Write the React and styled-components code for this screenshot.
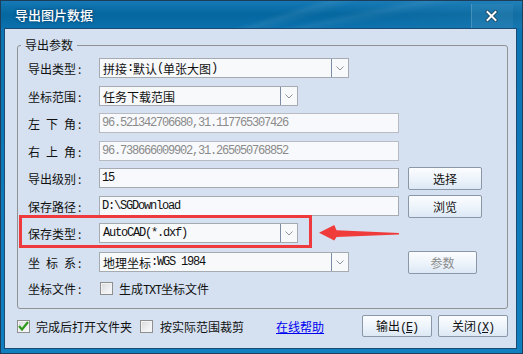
import React from 'react'
import styled, { createGlobalStyle } from 'styled-components'

const GlobalStyle = createGlobalStyle`
  html, body {
    margin: 0;
    padding: 0;
    background: #ffffff;
  }
  body {
    font-family: "Noto Sans CJK SC", "Liberation Sans", sans-serif;
    font-size: 12px;
    color: #111;
  }
`

const Window = styled.div`
  position: relative;
  width: 523px;
  height: 354px;
  box-sizing: border-box;
  border: 1px solid #1f3d58;
  background: linear-gradient(180deg, #0c74b2 0%, #0d7abb 60%, #0f7fc0 100%);
  display: flex;
  flex-direction: column;
`

const TitleBar = styled.div`
  height: 27px;
  display: flex;
  align-items: center;
  padding-left: 14px;
  background:
    linear-gradient(162deg, transparent 52%, rgba(255, 255, 255, 0.07) 55%, transparent 60%),
    linear-gradient(168deg, transparent 62%, rgba(255, 255, 255, 0.06) 66%, transparent 72%),
    linear-gradient(90deg, rgba(255, 255, 255, 0) 60%, rgba(255, 255, 255, 0.05) 100%),
    linear-gradient(180deg, #1479b5 0%, #05679f 50%, #0a70ad 100%);
`

const Title = styled.span`
  color: #fff;
  font-size: 13px;
  font-weight: 500;
  text-shadow: 0 0 3px rgba(0, 30, 60, 0.7);
`

const CloseBtn = styled.div`
  margin-left: auto;
  margin-right: 9px;
  margin-top: 3px;
  width: 42px;
  height: 24px;
  box-sizing: border-box;
  border-left: 1px solid rgba(255, 255, 255, 0.18);
  background: rgba(255, 255, 255, 0.05);
  display: flex;
  align-items: center;
  justify-content: center;
  padding-right: 2px;
`

const Body = styled.div`
  flex: 1;
  margin: 0 5px 4px 3px;
  border: 1px solid #1b4b73;
  background: #d5e1f0;
  display: flex;
  flex-direction: column;
`

const Group = styled.fieldset`
  margin: 8px 8px 0 12px;
  padding: 5px 0 10px 10px;
  border: 1px solid #8f9193;
  border-radius: 3px;
  min-width: 0;
`

const Legend = styled.legend`
  margin-left: -7px;
  padding: 0 4px;
  line-height: 16px;
  font-size: 12px;
  color: #111;
`

const Row = styled.div`
  display: flex;
  align-items: center;
  height: ${p => p.$h || 20}px;
  margin-top: ${p => p.$gap || 0}px;
`

const Label = styled.div`
  width: 71px;
  display: flex;
  align-items: center;
  flex-shrink: 0;
`

const LabelChars = styled.span`
  width: 48px;
  display: flex;
  justify-content: space-between;
`

const Colon = styled.span`
  margin-left: 2px;
`

const FieldCell = styled.div`
  width: 309px;
  flex-shrink: 0;
  display: flex;
  align-items: center;
`

const Combo = styled.div`
  width: ${p => p.$w}px;
  height: 20px;
  box-sizing: border-box;
  border: 1px solid #a6abb2;
  background: #f8f9fb;
  display: flex;
`

const ComboText = styled.div`
  flex: 1;
  padding-left: 3px;
  display: flex;
  align-items: center;
  white-space: nowrap;
  color: #111;
`

const ComboArrow = styled.div`
  width: 16px;
  border-left: 1px solid #7b8ca4;
  display: flex;
  align-items: center;
  justify-content: center;
`

const TextBox = styled.div`
  width: 300px;
  height: 20px;
  box-sizing: border-box;
  border: 1px solid ${p => (p.$disabled ? '#b8bcc2' : '#a6abb2')};
  background: #f8f9fc;
  padding-left: 2px;
  display: flex;
  align-items: center;
  white-space: nowrap;
  color: ${p => (p.$disabled ? '#8a8a8a' : '#111')};
`

const Mono = styled.span`
  font-family: "Liberation Mono", "DejaVu Sans Mono", monospace;
  font-size: 12px;
  letter-spacing: -1.2px;
  white-space: pre;
`

const Button = styled.div`
  width: ${p => p.$w || 74}px;
  height: ${p => p.$h || 23}px;
  box-sizing: border-box;
  border: 1px solid #8a97a6;
  border-radius: 2px;
  background: linear-gradient(180deg, #fbfdff 0%, #eef4fb 50%, #dce8f5 100%);
  display: flex;
  align-items: center;
  justify-content: center;
  color: ${p => (p.$disabled ? '#8c8c8c' : '#111')};
  flex-shrink: 0;
`

const Check = styled.div`
  width: 13px;
  height: 13px;
  box-sizing: border-box;
  border: 1px solid #8e8f8f;
  background: linear-gradient(135deg, #d6d8db 0%, #eceef0 55%, #fbfbfb 100%);
  box-shadow: inset 0 0 0 1px #f4f4f4;
  display: flex;
  align-items: center;
  justify-content: center;
  flex-shrink: 0;
`

const CheckText = styled.span`
  margin-left: ${p => p.$gap || 6}px;
  white-space: nowrap;
`

const BottomBar = styled.div`
  display: flex;
  align-items: center;
  height: 22px;
  margin: 6px 8px 0 12px;
`

const Gap = styled.span`
  width: ${p => p.$w}px;
  flex-shrink: 0;
`

const HelpLink = styled.a`
  color: #0000f0;
  text-decoration: underline;
  cursor: pointer;
  white-space: nowrap;
`

const Buttons = styled.div`
  margin-left: auto;
  display: flex;
  gap: 6px;
`

const Highlight = styled.div`
  position: absolute;
  left: 18px;
  top: 214px;
  width: 293px;
  height: 33px;
  box-sizing: border-box;
  border: 3px solid #ef3a3d;
  pointer-events: none;
`

const Arrow = styled.svg`
  position: absolute;
  left: 316px;
  top: 220px;
  pointer-events: none;
`

// latin runs get the narrow fixed width the dialog font has
const withMono = text =>
  text
    .split(/([\x20-\x7e]+)/)
    .filter(Boolean)
    .map((part, i) =>
      /^[\x20-\x7e]+$/.test(part) ? <Mono key={i}>{part}</Mono> : <span key={i}>{part}</span>
    )

const FieldLabel = ({ text }) => (
  <Label>
    <LabelChars>
      {text.split('').map((c, i) => (
        <span key={i}>{c}</span>
      ))}
    </LabelChars>
    <Colon>:</Colon>
  </Label>
)

const Chevron = () => (
  <svg width="8" height="5" viewBox="0 0 8 5">
    <path d="M0.5 0.5 L4 4 L7.5 0.5" fill="none" stroke="#8d949c" strokeWidth="1" />
  </svg>
)

const Select = ({ width, value }) => (
  <Combo $w={width}>
    <ComboText>{withMono(value)}</ComboText>
    <ComboArrow>
      <Chevron />
    </ComboArrow>
  </Combo>
)

const CheckBox = ({ checked }) => (
  <Check>
    {checked && (
      <svg width="11" height="10" viewBox="0 0 11 10">
        <path d="M1 5 L4 8.5 L10 1" fill="none" stroke="#2f9a1c" strokeWidth="2.2" />
      </svg>
    )}
  </Check>
)

const Accel = ({ label, k }) => (
  <span>
    {label}
    <Mono>
      (<u>{k}</u>)
    </Mono>
  </span>
)

const App = () => (
  <Window>
    <GlobalStyle />
    <TitleBar>
      <Title>导出图片数据</Title>
      <CloseBtn>
        <svg width="13" height="12" viewBox="0 0 13 12">
          <path d="M2.5 2 L10.5 10 M10.5 2 L2.5 10" stroke="#16405e" strokeWidth="3.6" strokeLinecap="square" />
          <path d="M2.5 2 L10.5 10 M10.5 2 L2.5 10" stroke="#ffffff" strokeWidth="2" strokeLinecap="square" />
        </svg>
      </CloseBtn>
    </TitleBar>
    <Body>
      <Group>
        <Legend>导出参数</Legend>
        <Row>
          <FieldLabel text="导出类型" />
          <FieldCell>
            <Select width={250} value="拼接:默认(单张大图)" />
          </FieldCell>
        </Row>
        <Row $gap={8}>
          <FieldLabel text="坐标范围" />
          <FieldCell>
            <Select width={199} value="任务下载范围" />
          </FieldCell>
        </Row>
        <Row $gap={7}>
          <FieldLabel text="左下角" />
          <FieldCell>
            <TextBox $disabled>
              <Mono>96.521342706680,31.117765307426</Mono>
            </TextBox>
          </FieldCell>
        </Row>
        <Row $gap={8}>
          <FieldLabel text="右上角" />
          <FieldCell>
            <TextBox $disabled>
              <Mono>96.738666009902,31.265050768852</Mono>
            </TextBox>
          </FieldCell>
        </Row>
        <Row $gap={7}>
          <FieldLabel text="导出级别" />
          <FieldCell>
            <TextBox>
              <Mono>15</Mono>
            </TextBox>
          </FieldCell>
          <Button>选择</Button>
        </Row>
        <Row $gap={8}>
          <FieldLabel text="保存路径" />
          <FieldCell>
            <TextBox>
              <Mono>D:\SGDownload</Mono>
            </TextBox>
          </FieldCell>
          <Button>浏览</Button>
        </Row>
        <Row $gap={7}>
          <FieldLabel text="保存类型" />
          <FieldCell>
            <Select width={199} value="AutoCAD(*.dxf)" />
          </FieldCell>
        </Row>
        <Row $gap={9}>
          <FieldLabel text="坐标系" />
          <FieldCell>
            <Select width={250} value="地理坐标:WGS 1984" />
          </FieldCell>
          <Button $w={69} $disabled>
            参数
          </Button>
        </Row>
        <Row $gap={7} $h={19}>
          <FieldLabel text="坐标文件" />
          <Gap $w={1} />
          <CheckBox />
          <CheckText>{withMono('生成TXT坐标文件')}</CheckText>
        </Row>
      </Group>
      <BottomBar>
        <CheckBox checked />
        <CheckText>完成后打开文件夹</CheckText>
        <Gap $w={8} />
        <CheckBox />
        <CheckText $gap={7}>按实际范围裁剪</CheckText>
        <Gap $w={32} />
        <HelpLink>在线帮助</HelpLink>
        <Buttons>
          <Button $w={70} $h={22}>
            <Accel label="输出" k="E" />
          </Button>
          <Button $w={70} $h={22}>
            <Accel label="关闭" k="X" />
          </Button>
        </Buttons>
      </BottomBar>
    </Body>
    <Highlight />
    <Arrow width="86" height="24" viewBox="0 0 86 24">
      <path
        d="M2 11.7 L17.3 4 L19.5 9.3 L82 11.9 L82 13.4 L19.5 16 L17.3 19.5 Z"
        fill="#f03b3b"
      />
    </Arrow>
  </Window>
)

export default App
